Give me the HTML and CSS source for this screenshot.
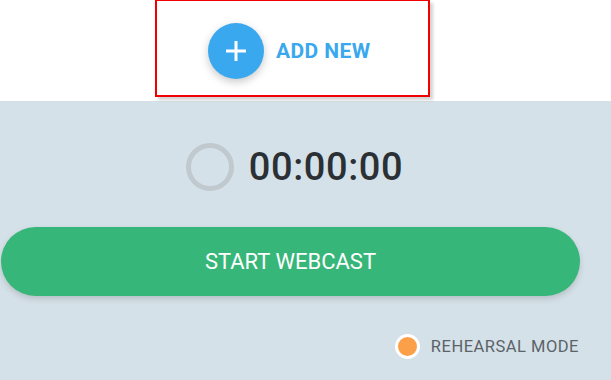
FILE: index.html
```html
<!DOCTYPE html>
<html>
<head>
<meta charset="utf-8">
<link rel="stylesheet" href="styles.css">
</head>
<body>
<div class="page">
  <header class="top">
    <div class="highlight">
      <button class="add">
        <span class="add-icon">
          <svg width="24" height="24" viewBox="0 0 24 24"><path d="M12 2v20M2 12h20" stroke="#fff" stroke-width="3" stroke-linecap="butt"/></svg>
        </span>
        <span class="add-label">ADD NEW</span>
      </button>
    </div>
  </header>
  <main class="panel">
    <div class="timer">
      <span class="ring"></span>
      <span class="time">00:00:00</span>
    </div>
    <button class="start">START WEBCAST</button>
    <div class="mode">
      <span class="dot"></span>
      <span class="mode-label">REHEARSAL MODE</span>
    </div>
  </main>
</div>
</body>
</html>
```

FILE: styles.css
```css
html, body {
  margin: 0;
  padding: 0;
}
body {
  width: 611px;
  height: 380px;
  overflow: hidden;
  font-family: Roboto, "Liberation Sans", sans-serif;
  background: #d5e1e8;
}
.page {
  display: flex;
  flex-direction: column;
  height: 380px;
}
.top {
  height: 101px;
  background: #fff;
  display: flex;
  justify-content: flex-start;
  padding-left: 155px;
  box-sizing: border-box;
}
.highlight {
  width: 275px;
  height: 97px;
  box-sizing: border-box;
  border: 2px solid #f00000;
  border-top-width: 1px;
  box-shadow: 3px 3px 3px rgba(0,0,0,0.18);
  display: flex;
  align-items: center;
  padding-left: 51px;
  padding-top: 6px;
}
.add {
  display: flex;
  align-items: center;
  gap: 12px;
  border: 0;
  background: none;
  padding: 0;
  font-family: inherit;
}
.add-icon {
  width: 56px;
  height: 56px;
  border-radius: 50%;
  background: #3aa8ee;
  display: flex;
  align-items: center;
  justify-content: center;
  box-shadow: 0 3px 8px rgba(0,0,0,0.22);
}
.add-label {
  color: #3aa8ee;
  font-weight: 700;
  font-size: 21px;
  letter-spacing: 0.4px;
}
.panel {
  flex: 1;
  display: flex;
  flex-direction: column;
  align-items: stretch;
}
.timer {
  display: flex;
  align-items: center;
  justify-content: center;
  gap: 15px;
  margin-top: 42px;
  padding-right: 22px;
}
.ring {
  width: 38px;
  height: 38px;
  border-radius: 50%;
  border: 5px solid #bfc9ce;
}
.time {
  font-size: 38px;
  font-weight: 500;
  color: #2b3035;
  letter-spacing: 0.6px;
}
.start {
  margin: 36px 31px 0 1px;
  height: 69px;
  border: 0;
  border-radius: 35px;
  background: #37b679;
  color: #fff;
  font-family: inherit;
  font-size: 22px;
  font-weight: 400;
  box-shadow: 0 3px 6px rgba(0,0,0,0.15);
}
.mode {
  display: flex;
  align-items: center;
  justify-content: flex-end;
  gap: 11px;
  margin-top: 38px;
  padding-right: 32px;
}
.dot {
  width: 19px;
  height: 19px;
  border-radius: 50%;
  background: #fb9f49;
  border: 3px solid #fff;
}
.mode-label {
  font-size: 16.5px;
  color: #5b6368;
  letter-spacing: 0.5px;
}
```
